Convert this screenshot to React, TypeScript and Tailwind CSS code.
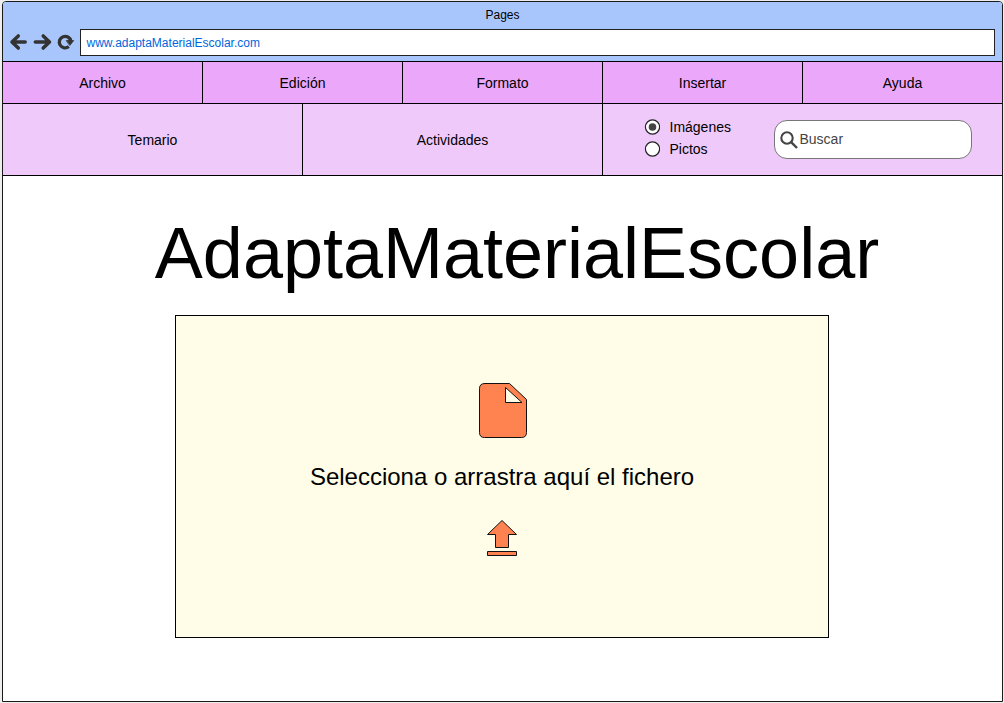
import React from "react";

const menu = ["Archivo", "Edición", "Formato", "Insertar", "Ayuda"];

function NavIcons() {
  return (
    <svg width="68" height="18" viewBox="0 0 68 18" className="mt-[4px] shrink-0" fill="none" stroke="#333" strokeWidth="3.5" strokeLinecap="round" strokeLinejoin="round">
      <path d="M9.3 2.9 L3 9 L9.3 15.1 M3.4 9 H16.2" />
      <path d="M34.2 2.9 L40.5 9 L34.2 15.1 M40.1 9 H26.3" />
      <path d="M59.8 13.6 A5.8 5.8 0 1 1 61.8 8" strokeWidth="3.3" strokeLinecap="butt" />
      <path d="M57.6 7.6 H64.6 L61 12.2 Z" fill="#333" strokeWidth="0.9" />
    </svg>
  );
}

function Radio({ label, checked }: { label: string; checked?: boolean }) {
  return (
    <label className="flex h-[22px] items-center gap-[9.5px]">
      <svg width="16" height="16" viewBox="0 0 16 16">
        <circle cx="8.5" cy="8" r="7.1" fill="#fff" stroke="#222" strokeWidth="1.2" />
        {checked && <circle cx="8.5" cy="8" r="3.8" fill="#444" />}
      </svg>
      <span>{label}</span>
    </label>
  );
}

export default function App() {
  return (
    <div className="h-[703px] w-[1004px] bg-[#eeeeee] pl-[2px] pt-px font-['Liberation_Sans',Arial,sans-serif] text-[14px] leading-[16px] text-black">
      <div className="flex h-[701px] w-[1001px] flex-col overflow-hidden rounded-t-[4px] border border-[#1a1a1a] bg-white">
        <header className="h-[59px] shrink-0 bg-[#a9c6fc]">
          <div className="flex h-[27px] items-center justify-center pb-px text-[12px]">Pages</div>
          <div className="flex items-start pl-[6px]">
            <NavIcons />
            <div className="ml-[3px] flex h-[27px] w-[915px] items-center border border-[#222] bg-white pl-[5.5px] pt-px text-[12px] text-[#0066dd]">
              www.adaptaMaterialEscolar.com
            </div>
          </div>
        </header>
        <nav className="-mx-px grid h-[42px] shrink-0 grid-cols-[201px_200px_200px_200px_200px] border-t border-black bg-[#eba8fb]">
          {menu.map((m) => (
            <div key={m} className="flex items-center justify-center border-r border-black pt-px first:pl-px">
              {m}
            </div>
          ))}
        </nav>
        <div className="-mx-px grid h-[73px] shrink-0 grid-cols-[301px_300px_400px] border-y border-black bg-[#f0c9fb]">
          <div className="flex items-center justify-center border-r border-black pl-px pt-px">Temario</div>
          <div className="flex items-center justify-center border-r border-black pt-px">Actividades</div>
          <div className="flex border-r border-black">
            <div className="ml-[41px] w-[130px] pt-[12px]">
              <Radio label="Imágenes" checked />
              <Radio label="Pictos" />
            </div>
            <div className="mt-[16px] flex h-[39px] w-[198px] items-center rounded-[13px] border border-[#777] bg-white pl-[5px] text-[#444]">
              <svg width="18" height="18" viewBox="0 0 18 18" fill="none" stroke="#444" strokeWidth="2.1">
                <circle cx="7" cy="7" r="5.7" />
                <path d="M10.9 10.9 L17 17" strokeWidth="2.4" />
              </svg>
              <span className="ml-[1.5px] pb-px">Buscar</span>
            </div>
          </div>
        </div>
        <main className="flex flex-col">
          <h1 className="mt-[36px] self-center pl-[29px] text-[72px] leading-[82px]">AdaptaMaterialEscolar</h1>
          <section className="ml-[172px] mt-[21px] flex h-[323px] w-[654px] flex-col items-center border border-black bg-[#fffde8]">
            <svg width="50" height="58" viewBox="0 0 50 58" className="ml-[2px] mt-[66px]" fill="#ff8351" stroke="#111" strokeWidth="1">
              <path d="M7 1.5 H31.5 L48.5 17.5 V50.5 Q48.5 55.5 43.5 55.5 H6.5 Q1.5 55.5 1.5 50.5 V6.5 Q1.5 1.5 7 1.5 Z" />
              <path d="M27.5 5.5 V20.5 H44 Z" fill="#fffde8" />
            </svg>
            <p className="mt-[23px] text-[24px] leading-[28px]">Selecciona o arrastra aquí el fichero</p>
            <svg width="32" height="38" viewBox="0 0 32 38" className="mt-[28px]" fill="#ff8351" stroke="#111" strokeWidth="1">
              <path d="M16 1.5 L30.5 15.5 H22.5 V28.5 H9.5 V15.5 H1.5 Z" />
              <path d="M1.5 32.5 H30.5 V36.5 H1.5 Z" />
            </svg>
          </section>
        </main>
      </div>
    </div>
  );
}
